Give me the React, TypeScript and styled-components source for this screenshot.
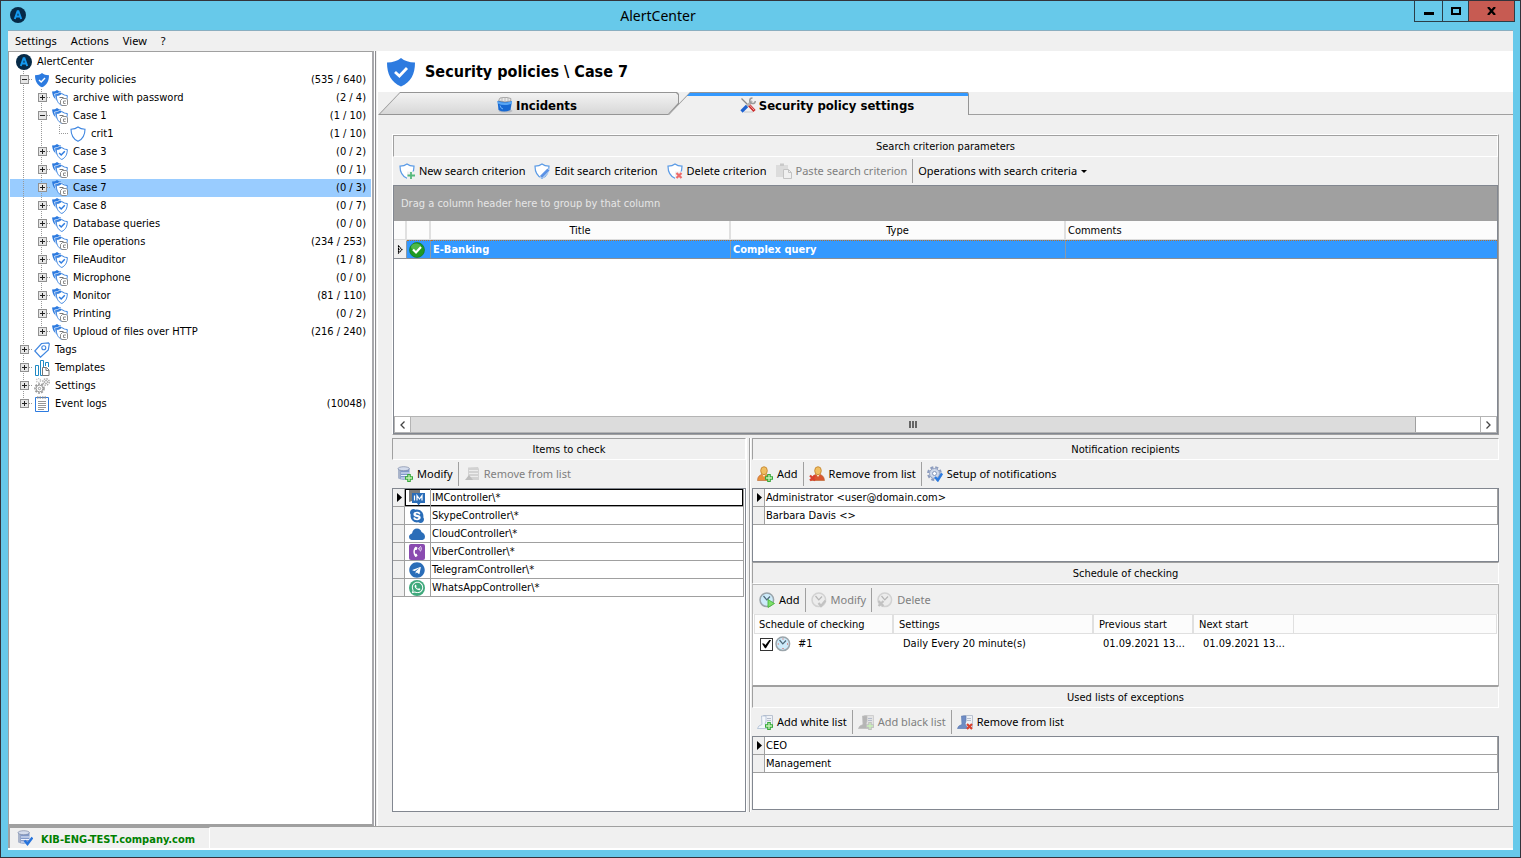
import React from "react";
import styled, { createGlobalStyle, css } from "styled-components";
import { FaSkype, FaTelegram, FaWhatsapp, FaPhoneVolume } from "react-icons/fa";

/* ---------- theme ---------- */
const face = "#f0f0f0";
const line = "#a0a0a0";
const edge = "#828790";
const small = '11px/16px "DejaVu Sans Condensed", "Noto Sans", sans-serif';
const bar = '11px/16px "Noto Sans", "Open Sans", sans-serif';

const Global = createGlobalStyle`
  *, *::before, *::after { box-sizing: border-box; }
  body { margin: 0; background: #67c9ea; color: #000; font: ${small}; }
  button { font: inherit; color: inherit; background: none; border: 0; padding: 0; margin: 0; }
  h1, h2 { margin: 0; font: inherit; }
  svg { display: block; flex: none; }
`;

/* ---------- icons ---------- */
const SHIELD = "M8 1C6.2 2.5 4 3.2 1 3.2C1 9 3 13 8 15.3C13 13 15 9 15 3.2C12 3.2 9.800 2.500 8 1Z";
const Svg = ({ size = 16, children, box = "0 0 16 16" }: { size?: number; box?: string; children: React.ReactNode }) => (
  <svg width={size} height={size} viewBox={box} fill="none" aria-hidden="true">{children}</svg>
);
const Logo = () => (
  <Svg>
    <circle cx="8" cy="8" r="8" fill="#062a47" />
    <path d="M4.800 12L7.600 4.200H8.400L11.200 12M6 9.500H10" stroke="#149af0" strokeWidth="2" />
  </Svg>
);
const SolidShield = ({ size = 16 }: { size?: number }) => (
  <Svg size={size}>
    <path d={SHIELD} fill="#2d7be0" />
    <path d="M5 8L7.200 10L11 6" stroke="#fff" strokeWidth="1.4" />
  </Svg>
);
const OutlineShield = () => (
  <Svg><path d={SHIELD} fill="#fff" stroke="#3f86e0" strokeWidth="1.1" /></Svg>
);
const MiniShield = "M0 2C2.200 2 4 1.300 5.500 0C7 1.300 8.800 2 11 2C11 6.500 9.500 10 5.500 12C1.500 10 0 6.500 0 2Z";
const PolicyIcon = ({ check }: { check?: boolean }) => (
  <Svg>
    <path d="M0 1.500Q3.500 1.500 5 0Q7 1.500 9 1.500V8L5 10Q1 9 0 1.500Z" fill="#2d7be0" />
    <path d="M2.500 4Q6 4 8 2Q10 4 12 4V9L7 12Q3 10 2.500 4Z" fill="#2d7be0" stroke="#fff" strokeWidth=".7" />
    <path d={MiniShield} transform="translate(4.300 3.500)" fill="#fff" stroke="#3f86e0" />
    {check ? (
      <path d="M7.200 9L9.200 11L12.800 7.300" stroke="#2d7be0" strokeWidth="1.500" />
    ) : (
      <>
        <path d="M7.500 7.500H11.500" stroke="#777" />
        <path d="M10.500 8.500H14.500L15.500 10V14.500L14.500 15.500H10L8.500 14V10.500Z" fill="#fff" stroke="#8d8d8d" />
        <path d="M14 11H11.500V13.500H13.500" stroke="#8d8d8d" />
      </>
    )}
  </Svg>
);
const TagIcon = () => (
  <Svg>
    <path d="M7.500 1.500L14.500 .8L15.300 2L14.300 8L6.500 15.200L.8 9Z" fill="#fff" stroke="#3f86e0" strokeWidth="1.2" />
    <circle cx="9.800" cy="5.800" r="2" stroke="#3f86e0" strokeWidth="1.1" />
  </Svg>
);
const TemplatesIcon = () => (
  <Svg>
    <path d="M1.500 5.500H4.500V15.500H1.500ZM6.500 .5H9.500V15.500H6.500Z" fill="#fff" stroke="#1f8ac4" />
    <path d="M11.500 6V2.500H14.500V7" stroke="#1f8ac4" />
    <path d="M8.500 7.500H12.500L15 10V15.500H8.500Z" fill="#fff" stroke="#777" />
    <path d="M12 7.500V10.500H15" stroke="#777" />
  </Svg>
);
const GearsIcon = () => (
  <Svg>
    <circle cx="5.500" cy="10.500" r="4.500" stroke="#9a9a9a" strokeWidth="1.6" strokeDasharray="2 1.200" />
    <circle cx="5.500" cy="10.500" r="3.400" stroke="#9a9a9a" />
    <circle cx="5.500" cy="10.500" r="1.200" stroke="#9a9a9a" />
    <circle cx="12" cy="4" r="3.200" stroke="#a8a8a8" strokeWidth="1.500" strokeDasharray="1.500 1" />
    <circle cx="12" cy="4" r="1.500" stroke="#a8a8a8" />
    <circle cx="4.500" cy="2.500" r="2" stroke="#c6c6c6" strokeWidth="1.500" strokeDasharray="1.200 .8" />
  </Svg>
);
const LogIcon = () => (
  <Svg>
    <path d="M1.500 1.500H14.500V15.500H1.500Z" fill="#fff" stroke="#2d7be0" />
    <path d="M3 1.500H13" stroke="#888" strokeWidth="2" strokeDasharray="1.500 1" />
    <path d="M4 5.500H12M4 7.500H12M4 9.500H12M4 11.500H12M4 13.500H10" stroke="#8a8a8a" strokeWidth=".9" />
  </Svg>
);
const IncidentsIcon = () => (
  <Svg>
    <ellipse cx="8.500" cy="14" rx="7" ry="1.600" fill="#b9bcc2" />
    <path d="M.5 4L1.500 13Q7 16 13.500 13L15 4Z" fill="#1769d2" />
    <path d="M.5 4Q7 7 15 4V6.500Q7 9.500 .8 6.500Z" fill="#57a6f5" />
    <path d="M1.500 3.800L3 1L7 .4L10 .5L13.800 1.500V4Q8 6 1.500 3.800Z" fill="#e8e8e8" stroke="#8d8d8d" strokeWidth=".7" />
    <path d="M5 1V4M8 .8V4.500M11 1V4.300" stroke="#aaa" strokeWidth=".7" />
    <path d="M3 8.500Q3.500 11.500 6 12" stroke="#6fb4fb" />
  </Svg>
);
const ToolsIcon = () => (
  <Svg>
    <path d="M4 15H13" stroke="#cfcfcf" strokeWidth="1.200" />
    <path d="M1.500 1.500L8 8" stroke="#888" strokeWidth="1.200" />
    <path d="M8 7L14.500 14" stroke="#cc2b2b" strokeWidth="3" />
    <path d="M9 7.500L14 13" stroke="#fff" strokeWidth=".6" />
    <path d="M7 9L12 4" stroke="#b5b5b5" strokeWidth="2.400" />
    <path d="M12.500 1A2.800 2.800 0 1 0 15.300 4" stroke="#9a9a9a" strokeWidth="1.500" />
    <path d="M1.500 14.500L7 9" stroke="#1e62d0" strokeWidth="3.200" />
  </Svg>
);
const PlusBadge = ({ c = "#35a83a" }: { c?: string }) => (
  <>
    <path d="M12 8V16M8 12H16" stroke={c} strokeWidth="3.600" />
    <path d="M12 9V15M9 12H15" stroke="#c9f2b8" strokeWidth="1.300" />
  </>
);
const CrossBadge = ({ x = 12, y = 12, c = "#d9412f" }: { x?: number; y?: number; c?: string }) => (
  <path d={`M${x - 2.5} ${y - 2.5}L${x + 2.5} ${y + 2.5}M${x + 2.5} ${y - 2.5}L${x - 2.5} ${y + 2.5}`} stroke={c} strokeWidth="2.200" />
);
const CriterionIcon = ({ kind }: { kind: "new" | "edit" | "delete" }) => (
  <Svg>
    <path d={SHIELD} fill="#fff" stroke="#5b9be6" strokeWidth="1.200" />
    {kind === "new" && (<><path d="M8 8.500H16V16H8Z" fill={face} /><path d="M12 9V16M8.500 12.500H16" stroke="#55b87c" strokeWidth="1.800" /></>)}
    {kind === "edit" && (<><path d="M5.500 14.500L14.500 5.500L16 8L9 15Z" fill={face} /><path d="M7 14L14.500 6.500" stroke="#5b93e6" strokeWidth="3" /></>)}
    {kind === "delete" && (<><path d="M8 8.500H16V16H8Z" fill={face} /><CrossBadge x={12} y={12.500} c="#ee6b6b" /></>)}
  </Svg>
);
const PasteIcon = () => (
  <Svg>
    <path d="M0 2H12V14H0Z" fill="#dcdcdc" />
    <path d="M4 .5H8V3H4Z" fill="#c9c9c9" />
    <path d="M7.500 6.500H12.500L15.500 9.500V15.500H7.500Z" fill={face} stroke="#c4c4c4" />
    <path d="M12.500 6.500V9.500H15.500" stroke="#c4c4c4" />
  </Svg>
);
const ServerIcon = ({ badge, off }: { badge?: "plus" | "check" | "list"; off?: boolean }) => {
  const shade = off ? "#c6c6c6" : "#8199c9";
  const lit = off ? "#dedede" : "#d4dcec";
  return (
    <Svg>
      {badge === "list" ? (
        <>
          <path d="M4 1.500L14 1L15 3V14H4Z" fill="#d2d2d2" />
          <path d="M5 4.500H14M5 7.500H14M5 10.500H14" stroke="#ececec" />
          <path d="M1 14L5 9L9 14Z" fill="#bdbdbd" />
        </>
      ) : (
        <>
          <path d="M1 2.500V12Q6 15.500 12.500 12V2.500Z" fill={shade} />
          <path d="M1 3V12L3.500 13.500V4Z" fill="#a9b4ca" />
          <ellipse cx="6.700" cy="2.700" rx="5.700" ry="2" fill={lit} stroke="#7c8aa8" strokeWidth=".7" />
          <path d="M4 7H12.500M4 9.500H12.500M4 12H9" stroke="#eef3ff" strokeWidth="1" />
        </>
      )}
      {badge === "plus" && <PlusBadge />}
      {badge === "check" && <path d="M7.500 10.500L10.500 14L15.500 7.500" stroke="#2573dc" strokeWidth="2.400" />}
    </Svg>
  );
};
const PersonIcon = ({ badge }: { badge: "plus" | "cross" }) => {
  const plus = badge === "plus";
  return (
    <Svg>
      <path d={plus ? "M.5 14.500Q.5 8.500 7 8Q12 8.500 13 14.500Z" : "M2 14.500Q3 8.500 9 8Q15 8.500 15.500 14.500Z"} fill={plus ? "#e8903a" : "#d9562f"} stroke="#b8612a" strokeWidth=".6" />
      <path d={plus ? "M5 8L7 11L9 8Z" : "M7 8L9 11L11 8Z"} fill="#fbe9c8" />
      <ellipse cx={plus ? 7 : 9} cy="4.700" rx="3.300" ry="4" fill="#f0bf62" stroke="#c07d26" strokeWidth=".8" />
      {plus ? <PlusBadge /> : <CrossBadge x={3.5} y={12} />}
    </Svg>
  );
};
const GearCheckIcon = () => (
  <Svg>
    <circle cx="7.500" cy="7.500" r="6.300" stroke="#8d9cbd" strokeWidth="2.200" strokeDasharray="3 1.950" />
    <circle cx="7.500" cy="7.500" r="5" fill="#d0d9ea" stroke="#93a2c2" />
    <circle cx="7.500" cy="7.500" r="2" fill="#fff" stroke="#8798bb" />
    <path d="M8 11L10.800 14.300L15 7.500" stroke="#2d7be0" strokeWidth="2.400" />
  </Svg>
);
const ClockIcon = ({ badge, off }: { badge?: "play" | "check" | "cross"; off?: boolean }) => (
  <Svg>
    <circle cx="7.800" cy="7.800" r="6.800" fill={off ? "#ececec" : "#cdebfa"} stroke={off ? "#d2d2d2" : "#9aa4aa"} strokeWidth="1.500" />
    <path d="M4.500 4L7.800 7.800L11 4.500" stroke={off ? "#b5b5b5" : "#4d6878"} strokeWidth="1.200" />
    {!badge && <path d="M8 2.500V3.500M8 12V13M2.800 8H3.800M12 8H13" stroke="#e04a3a" />}
    {badge === "play" && <path d="M9 7.500L15.500 11.500L9 15.500Z" fill="#7fe06a" stroke="#3fae35" strokeWidth=".8" />}
    {badge === "check" && <path d="M7.500 11L10 14L14.500 8.500" stroke="#c2c2c2" strokeWidth="2.200" />}
    {badge === "cross" && <CrossBadge x={4} y={11.5} c="#c2c2c2" />}
  </Svg>
);
const ListIcon = ({ kind }: { kind: "white" | "black" | "remove" }) => {
  const person = { white: "#f4f7fb", black: "#b5b5b5", remove: "#6f8cc4" }[kind];
  const rim = { white: "#a3b6cf", black: "#bcbcbc", remove: "#5f7cb4" }[kind];
  return (
    <Svg>
      <path d="M6.500 1.500H15.500V13.500H6.500Z" fill={kind === "black" ? "#e3e3e3" : "#eef1f6"} stroke={kind === "black" ? "#cfcfcf" : "#b9c2d0"} />
      <path d="M10 4.500H14M10 6.500H14" stroke="#b5bccb" />
      <path d="M4.500 2H9V7L8 10L11 14.500H.5Q1 11.500 5 10.500Z" fill={person} stroke={rim} strokeWidth=".7" />
      {kind === "white" && <PlusBadge />}
      {kind === "black" && <PlusBadge c="#c0c0c0" />}
      {kind === "remove" && <CrossBadge x={12.5} y={12.5} />}
    </Svg>
  );
};
const OkIcon = () => (
  <Svg>
    <circle cx="8" cy="8" r="7.500" fill="#1f9a22" stroke="#12701a" strokeWidth=".6" />
    <ellipse cx="7" cy="5" rx="5" ry="3.500" fill="#6fce62" opacity=".6" />
    <path d="M4 7.500L7 10.500L12 5" stroke="#fff" strokeWidth="2.200" />
  </Svg>
);
const Arrow = () => (
  <svg width="5" height="9" viewBox="0 0 5 9" aria-hidden="true"><path d="M0 0L5 4.500L0 9Z" fill="#000" /></svg>
);
const HollowArrow = () => (
  <svg width="6" height="9" viewBox="0 0 6 9" fill="none" aria-hidden="true"><path d="M1.500 1L5 4.500L1.500 8ZM1 4.500H3" stroke="#000" strokeWidth="1.100" strokeDasharray="1.600 .6" /></svg>
);
const ImIcon = () => (
  <Svg>
    <path d="M0 0H11V3H3V11L0 12Z" fill="#7d7d7d" />
    <path d="M3 3H16V13H11.500L9.500 15.500L8 13H3Z" fill="#2a6db8" />
    <path d="M5.500 5.500V10.500M8 10.500V5.500L10.500 9L13 5.500V10.500" stroke="#fff" strokeWidth="1.200" />
  </Svg>
);
const CloudIcon = () => (
  <Svg><path d="M2.500 14Q0 13.500 0 11Q0 8.500 3 7.500Q4 2.500 8 2.500Q11.500 2.500 12.500 6Q16 7.500 16 11Q16 13.500 13.500 14Z" fill="#2a6db8" /></Svg>
);
const ViberTile = styled.span`
  display: grid; place-items: center; width: 16px; height: 16px; border-radius: 2px; background: #8a4bb0; color: #fff;
`;
const ViberGlyph = styled(FaPhoneVolume)`transform: rotate(0deg);`;
const WhatsTile = styled(ViberTile)`border-radius: 8px; background: #3fa97c;`;

/* ---------- window frame ---------- */
const Window = styled.div`
  display: flex; flex-direction: column; min-height: 100vh;
  border: 1px solid #33333b; padding: 0 7px 7px; background: #67c9ea;
`;
const TitleBar = styled.header`
  display: flex; align-items: flex-start; height: 29px; margin-right: -2px; padding-left: 2px;
  & > svg { margin-top: 6px; }
`;
const Title = styled.h1`
  flex: 1; padding-right: 124px; text-align: center;
  font: 14px/30px "Noto Sans", sans-serif;
`;
const CaptionButton = styled.button<{ $w: number; $close?: boolean }>`
  display: grid; place-items: center; width: ${p => p.$w}px; height: 21px;
  border: 1px solid #2b3d47; border-top: 0; border-right-width: ${p => (p.$close ? 1 : 0)}px;
  background: ${p => (p.$close ? "#c75b52" : "transparent")};
`;
const Client = styled.div`
  flex: 1; display: flex; flex-direction: column; background: ${face}; border-top: 1px solid #8aaec0;
`;
const MenuBar = styled.nav`
  display: flex; gap: 14px; height: 20px; padding-left: 7px; font: ${bar};
`;
const Body = styled.div`flex: 1; display: flex;`;

/* ---------- tree ---------- */
const TreePane = styled.aside`
  flex: none; width: 366px; background: #fff; padding: 1px;
  border: 1px solid ${line}; border-right: 2px solid #a8a8ac; border-bottom: 2px solid ${line};
`;
const Divider = styled.div`
  flex: none; width: 4px; background: ${face};
  border-left: 1px solid #fff; border-right: 1px solid #fff;
  &::before { content: ""; display: block; width: 1px; height: 100%; background: #8c8c90; }
`;
const TreeRow = styled.div<{ $on?: boolean }>`
  display: flex; height: 18px; line-height: 18px; padding: 0 5px;
  background: ${p => (p.$on ? "#99ccff" : "transparent")};
`;
const dotsY = "repeating-linear-gradient(#999 0 1px, transparent 1px 2px)";
const dotsX = "repeating-linear-gradient(90deg, #999 0 1px, transparent 1px 2px)";
type CellKind = "line" | "mid" | "end" | "elbow";
const GuideCell = styled.span<{ $kind: CellKind }>`
  flex: none; width: 18px; height: 18px; padding: 4px 0 0 5px;
  background-repeat: no-repeat;
  ${p => p.$kind === "line" && css`background-image: ${dotsY}; background-size: 1px 18px; background-position: 8px 0;`}
  ${p => p.$kind === "mid" && css`background-image: ${dotsY}, ${dotsX}; background-size: 1px 18px, 5px 1px; background-position: 8px 0, 14px 8px;`}
  ${p => p.$kind === "end" && css`background-image: ${dotsY}, ${dotsX}; background-size: 1px 8px, 5px 1px; background-position: 8px 0, 14px 8px;`}
  ${p => p.$kind === "elbow" && css`background-image: ${dotsY}, ${dotsX}; background-size: 1px 8px, 10px 1px; background-position: 8px 0, 8px 8px;`}
`;
const Expander = styled.button<{ $open?: boolean }>`
  display: block; width: 9px; height: 9px; border: 1px solid #919191;
  background:
    linear-gradient(#222, #222) center / 5px 1px no-repeat,
    linear-gradient(#222, #222) center / 1px ${p => (p.$open ? 0 : 5)}px no-repeat,
    #e6e6e6;
`;
const NodeIcon = styled.span`flex: none; width: 18px; margin-right: 4px; padding: 1px;`;
const NodeCount = styled.span`margin-left: auto;`;

type Node = { text: string; count?: string; icon: React.ReactNode; cells: CellKind[]; open?: boolean; on?: boolean };
const policy = (text: string, count: string, check: boolean, extra: Partial<Node> = {}): Node => ({
  text, count, icon: <PolicyIcon check={check} />, cells: ["line", "mid"], ...extra,
});
const nodes: Node[] = [
  { text: "AlertCenter", icon: <Logo />, cells: [] },
  { text: "Security policies", count: "(535 / 640)", icon: <SolidShield />, cells: ["mid"], open: true },
  policy("archive with password", "(2 / 4)", false),
  policy("Case 1", "(1 / 10)", false, { open: true }),
  { text: "crit1", count: "(1 / 10)", icon: <OutlineShield />, cells: ["line", "line", "elbow"] },
  policy("Case 3", "(0 / 2)", true),
  policy("Case 5", "(0 / 1)", false),
  policy("Case 7", "(0 / 3)", false, { on: true }),
  policy("Case 8", "(0 / 7)", true),
  policy("Database queries", "(0 / 0)", true),
  policy("File operations", "(234 / 253)", false),
  policy("FileAuditor", "(1 / 8)", true),
  policy("Microphone", "(0 / 0)", false),
  policy("Monitor", "(81 / 110)", true),
  policy("Printing", "(0 / 2)", false),
  policy("Uploud of files over HTTP", "(216 / 240)", false, { cells: ["line", "end"] }),
  { text: "Tags", icon: <TagIcon />, cells: ["mid"] },
  { text: "Templates", icon: <TemplatesIcon />, cells: ["mid"] },
  { text: "Settings", icon: <GearsIcon />, cells: ["mid"] },
  { text: "Event logs", count: "(10048)", icon: <LogIcon />, cells: ["end"] },
];
const Tree = () => (
  <TreePane>
    {nodes.map(n => (
      <TreeRow key={n.text + n.cells.length} $on={n.on}>
        {n.cells.map((kind, i) => (
          <GuideCell key={i} $kind={kind}>
            {i === n.cells.length - 1 && kind !== "elbow" && (
              <Expander $open={n.open} aria-label={`${n.open ? "Collapse" : "Expand"} ${n.text}`} />
            )}
          </GuideCell>
        ))}
        <NodeIcon>{n.icon}</NodeIcon>
        <span>{n.text}</span>
        {n.count && <NodeCount>{n.count}</NodeCount>}
      </TreeRow>
    ))}
  </TreePane>
);

/* ---------- main area ---------- */
const Main = styled.main`flex: 1; min-width: 0; display: flex; flex-direction: column;`;
const Heading = styled.div`
  display: flex; align-items: center; gap: 8px; height: 41px; padding-left: 7px; background: #fff;
  h2 { font: bold 16px/22px "DejaVu Sans Condensed", sans-serif; }
`;
const TabStrip = styled.div`
  display: flex; height: 23px;
  &::after { content: ""; flex: 1; border-bottom: 1px solid ${line}; }
`;
const Tab = styled.button<{ $active?: boolean }>`
  position: relative; z-index: 0; display: flex; align-items: center; justify-content: center; gap: 3px;
  width: 301px; padding: 4px 0 0 17px; margin-left: ${p => (p.$active ? -11 : 0)}px;
  font: bold 13px/18px "DejaVu Sans Condensed", sans-serif;
  &::before, &::after { content: ""; position: absolute; inset: 0; z-index: -2; background: #959595; }
  &::after { z-index: -1; }
  svg { margin-bottom: 2px; }
  ${p => p.$active ? css`
    &::before { clip-path: polygon(22px 0, calc(100% - 1px) 0, 100% 2px, 100% 100%, 0 100%); }
    &::after {
      background: linear-gradient(#3399ff 0 4px, ${face} 4px);
      clip-path: polygon(22px 1px, calc(100% - 2px) 1px, calc(100% - 1px) 2px, calc(100% - 1px) 100%, 1px 100%);
    }
  ` : css`
    &::before { clip-path: polygon(22px 0, calc(100% - 2px) 0, 100% 2px, 100% 12px, calc(100% - 11px) 100%, 0 100%); }
    &::after {
      background: linear-gradient(#f4f4f4, #d6d6d6);
      clip-path: polygon(22px 1px, calc(100% - 3px) 1px, calc(100% - 1px) 3px, calc(100% - 1px) 11px, calc(100% - 11px) calc(100% - 1px), 2px calc(100% - 1px));
    }
  `}
`;
const Content = styled.div`flex: 1; display: flex; flex-direction: column; gap: 3px; padding: 19px 14px 14px;`;
const Panel = styled.section<{ $w?: number; $grow?: boolean }>`
  display: flex; flex-direction: column; min-width: 0;
  ${p => (p.$w ? `flex: none; width: ${p.$w}px;` : "")}
  ${p => (p.$grow ? "flex: 1;" : "")}
`;
const CriteriaPanel = styled(Panel)`
  height: 301px; border: 1px solid #fff; border-right-color: ${line}; border-bottom-color: ${line};
`;
const PanelTitle = styled.h2`
  flex: none; height: 22px; line-height: 21px; text-align: center;
  border: 1px solid #fff; border-top-color: ${line}; border-left-color: ${line};
`;
const ToolBar = styled.div<{ $inset?: boolean }>`
  flex: none; display: flex; align-items: center; height: 28px; padding-left: ${p => (p.$inset ? 6 : 5)}px; font: ${bar};
`;
const Tool = styled.button<{ $off?: boolean; $wide?: boolean }>`
  display: flex; align-items: center; gap: 4px; height: 24px; white-space: nowrap;
  margin-right: ${p => (p.$wide ? 9 : 5)}px; color: ${p => (p.$off ? "#7f7f7f" : "#000")};
`;
const Sep = styled.span`width: 1px; height: 24px; margin-right: 5px; background: ${line};`;
const Caret = styled.span`border: 3px solid transparent; border-top-color: #000; border-bottom-width: 0;`;

const GridBox = styled.div`
  flex: 1; display: flex; flex-direction: column; min-height: 0; background: #fff; border: 1px solid ${edge};
`;
const GroupBar = styled.div`
  flex: none; height: 35px; padding-left: 7px; line-height: 36px; background: #a0a0a0; color: #e6e6e6;
`;
const Table = styled.table`
  width: 100%; table-layout: fixed; border-collapse: separate; border-spacing: 0;
  th, td { height: 18px; padding: 0 2px; font-weight: normal; text-align: left; white-space: nowrap; overflow: hidden; text-overflow: ellipsis; line-height: 17px; }
`;
const CriteriaTable = styled(Table)`
  th { height: 19px; background: #fcfcfc; border-right: 2px solid #e0e0e0; border-bottom: 1px solid #ddd; text-align: center; }
  th:last-child { text-align: left; border-right: 0; }
  td { height: 19px; background: #3399ff; color: #fff; font-weight: bold; border-top: 1px dotted #b5702c; border-bottom: 1px solid #8a8f96; border-right: 1px solid #8c99a6; }
  td:first-child { background: ${face}; border-top-color: ${face}; padding-left: 3px; }
  td:last-child { border-right: 0; }
`;
const RowsTable = styled(Table)`
  td { border-right: 1px solid ${line}; border-bottom: 1px solid ${line}; padding: 0 1px; }
  td:first-child { background: ${face}; padding-left: 4px; }
`;
const ItemsTable = styled(RowsTable)`
  td:nth-child(2) { padding: 0 4px; }
  tr:first-child td:nth-child(2) { box-shadow: inset 1px 1px #000, inset 0 -1px #000; }
  tr:first-child td:nth-child(3) { box-shadow: inset 0 1px #000, inset -1px -1px #000; }
`;
const ItemsBox = styled(GridBox)`padding-right: 1px; `;
const Filler = styled.div`flex: 1;`;
const ScrollBar = styled.div`
  flex: none; display: flex; height: 17px; background: #fff; border: 1px solid #b4b4b4; border-width: 1px 0;
  button { display: grid; place-items: center; width: 17px; border: 1px solid #b4b4b4; border-width: 0 1px; }
`;
const Thumb = styled.div`
  flex: 1; margin-right: 64px; display: flex; align-items: center; justify-content: center; gap: 1px;
  background: #dcdcdc; border-right: 1px solid ${line};
  i { width: 2px; height: 7px; background: #666; }
`;
const Lower = styled.div`flex: 1; display: flex;`;
const Gutter = styled.div`
  flex: none; width: 5px; border-left: 1px solid #fff; border-right: 1px solid #fff;
  &::after { content: ""; display: block; width: 1px; height: 100%; margin-left: 2px; background: ${line}; }
`;
const RightColumn = styled.div`flex: 1; min-width: 0; display: flex; flex-direction: column; padding: 0 0 2px 1px;`;

const ScheduleBox = styled.div`
  flex: 1; display: flex; flex-direction: column; padding-top: 1px; border: 1px solid #b9b9b9; border-bottom-color: ${line};
`;
const ScheduleBody = styled.div`flex: 1; padding: 0 1px; background: #fff;`;
const ScheduleTable = styled(Table)`
  th { height: 20px; padding: 0 5px; background: #fcfcfc; border: 1px solid #e0e0e0; border-left-width: 0; border-right-width: 2px; }
  th:first-child { border-left-width: 1px; padding-left: 4px; }
  th:nth-child(4), th:last-child { border-right-width: 1px; }
  td { height: 19px; padding: 0 5px 0 9px; }
  td:first-child { padding-left: 6px; }
`;
const CheckLine = styled.label`display: flex; align-items: center; gap: 7px;`;
const CheckBox = styled.input`
  appearance: none; width: 13px; height: 13px; margin: 1px -5px 0 0; border: 1px solid #333; background: #fff;
  &:checked::before {
    content: ""; display: block; width: 11px; height: 11px; background: #000;
    clip-path: polygon(9% 45%, 27% 45%, 40% 60%, 75% 14%, 92% 14%, 45% 88%, 36% 88%);
  }
`;

const StatusBar = styled.footer`
  display: flex; height: 24px; background: ${face}; border-top: 1px solid ${line}; border-bottom: 2px solid #fff;
`;
const StatusCell = styled.div`
  display: flex; align-items: center; gap: 8px; width: 202px; padding: 3px 0 0 7px; color: #008000; font-weight: bold;
  border-left: 2px solid ${line}; border-top: 1px solid ${line}; border-right: 1px solid #fff;
  svg { margin-top: -4px; }
`;

const items: [React.ReactNode, string][] = [
  [<ImIcon />, "IMController\\*"],
  [<FaSkype size={16} color="#2a6db8" />, "SkypeController\\*"],
  [<CloudIcon />, "CloudController\\*"],
  [<ViberTile><ViberGlyph size={11} /></ViberTile>, "ViberController\\*"],
  [<FaTelegram size={16} color="#2a6db8" />, "TelegramController\\*"],
  [<WhatsTile><FaWhatsapp size={13} /></WhatsTile>, "WhatsAppController\\*"],
];

const NameList = ({ names }: { names: string[] }) => (
  <GridBox>
    <RowsTable>
      <colgroup><col width="12" /><col /></colgroup>
      <tbody>
        {names.map((name, i) => (
          <tr key={name}><td>{i === 0 && <Arrow />}</td><td>{name}</td></tr>
        ))}
      </tbody>
    </RowsTable>
  </GridBox>
);

export default function App() {
  return (
    <Window>
      <Global />
      <TitleBar>
        <Logo />
        <Title>AlertCenter</Title>
        <CaptionButton $w={28} aria-label="Minimize"><svg width="10" height="10"><path d="M0 6H10V9H0Z" /></svg></CaptionButton>
        <CaptionButton $w={26} aria-label="Maximize"><svg width="10" height="8"><path d="M1 1H9V7H1Z" fill="none" stroke="#000" strokeWidth="2" /></svg></CaptionButton>
        <CaptionButton $w={47} $close aria-label="Close"><svg width="9" height="8"><path d="M1 0L8 8M8 0L1 8" stroke="#000" strokeWidth="2.200" /></svg></CaptionButton>
      </TitleBar>
      <Client>
        <MenuBar>
          <button>Settings</button><button>Actions</button><button>View</button><button>?</button>
        </MenuBar>
        <Body>
          <Tree />
          <Divider />
          <Main>
            <Heading><SolidShield size={32} /><h2>Security policies \ Case 7</h2></Heading>
            <TabStrip role="tablist">
              <Tab role="tab"><IncidentsIcon />Incidents</Tab>
              <Tab role="tab" aria-selected $active><ToolsIcon />Security policy settings</Tab>
            </TabStrip>
            <Content>
              <CriteriaPanel>
                <PanelTitle>Search criterion parameters</PanelTitle>
                <ToolBar $inset>
                  <Tool $wide><CriterionIcon kind="new" />New search criterion</Tool>
                  <Tool $wide><CriterionIcon kind="edit" />Edit search criterion</Tool>
                  <Tool $wide><CriterionIcon kind="delete" />Delete criterion</Tool>
                  <Tool $off><PasteIcon />Paste search criterion</Tool>
                  <Sep />
                  <Tool>Operations with search criteria<Caret /></Tool>
                </ToolBar>
                <GridBox>
                  <GroupBar>Drag a column header here to group by that column</GroupBar>
                  <CriteriaTable>
                    <colgroup><col width="13" /><col width="24" /><col width="300" /><col width="335" /><col /></colgroup>
                    <thead><tr><th /><th /><th>Title</th><th>Type</th><th>Comments</th></tr></thead>
                    <tbody><tr><td><HollowArrow /></td><td><OkIcon /></td><td>E-Banking</td><td>Complex query</td><td /></tr></tbody>
                  </CriteriaTable>
                  <Filler />
                  <ScrollBar>
                    <button aria-label="Scroll left"><svg width="5" height="8"><path d="M4.500 .5L1 4L4.500 7.500" fill="none" stroke="#444" strokeWidth="1.300" /></svg></button>
                    <Thumb><i /><i /><i /></Thumb>
                    <button aria-label="Scroll right"><svg width="5" height="8"><path d="M.5 .5L4 4L.5 7.500" fill="none" stroke="#444" strokeWidth="1.300" /></svg></button>
                  </ScrollBar>
                </GridBox>
              </CriteriaPanel>
              <Lower>
                <Panel $w={354}>
                  <PanelTitle>Items to check</PanelTitle>
                  <ToolBar>
                    <Tool><ServerIcon badge="plus" />Modify</Tool>
                    <Sep />
                    <Tool $off><ServerIcon badge="list" off />Remove from list</Tool>
                  </ToolBar>
                  <ItemsBox>
                    <ItemsTable>
                      <colgroup><col width="12" /><col width="26" /><col /></colgroup>
                      <tbody>
                        {items.map(([icon, name], i) => (
                          <tr key={name}><td>{i === 0 && <Arrow />}</td><td>{icon}</td><td>{name}</td></tr>
                        ))}
                      </tbody>
                    </ItemsTable>
                  </ItemsBox>
                </Panel>
                <Gutter />
                <RightColumn>
                  <Panel $grow>
                    <PanelTitle>Notification recipients</PanelTitle>
                    <ToolBar>
                      <Tool><PersonIcon badge="plus" />Add</Tool>
                      <Sep />
                      <Tool><PersonIcon badge="cross" />Remove from list</Tool>
                      <Sep />
                      <Tool><GearCheckIcon />Setup of notifications</Tool>
                    </ToolBar>
                    <NameList names={["Administrator <user@domain.com>", "Barbara Davis <>"]} />
                  </Panel>
                  <Panel $grow>
                    <PanelTitle>Schedule of checking</PanelTitle>
                    <ScheduleBox>
                      <ToolBar $inset>
                        <Tool><ClockIcon badge="play" />Add</Tool>
                        <Sep />
                        <Tool $off><ClockIcon badge="check" off />Modify</Tool>
                        <Sep />
                        <Tool $off><ClockIcon badge="cross" off />Delete</Tool>
                      </ToolBar>
                      <ScheduleBody>
                        <ScheduleTable>
                          <colgroup><col width="140" /><col width="200" /><col width="100" /><col width="100" /><col /></colgroup>
                          <thead><tr><th>Schedule of checking</th><th>Settings</th><th>Previous start</th><th>Next start</th><th /></tr></thead>
                          <tbody>
                            <tr>
                              <td><CheckLine><CheckBox type="checkbox" defaultChecked /><ClockIcon />#1</CheckLine></td>
                              <td>Daily Every 20 minute(s)</td>
                              <td>01.09.2021 13...</td>
                              <td>01.09.2021 13...</td>
                              <td />
                            </tr>
                          </tbody>
                        </ScheduleTable>
                      </ScheduleBody>
                    </ScheduleBox>
                  </Panel>
                  <Panel $grow>
                    <PanelTitle>Used lists of exceptions</PanelTitle>
                    <ToolBar>
                      <Tool><ListIcon kind="white" />Add white list</Tool>
                      <Sep />
                      <Tool $off><ListIcon kind="black" />Add black list</Tool>
                      <Sep />
                      <Tool><ListIcon kind="remove" />Remove from list</Tool>
                    </ToolBar>
                    <NameList names={["CEO", "Management"]} />
                  </Panel>
                </RightColumn>
              </Lower>
            </Content>
          </Main>
        </Body>
        <StatusBar>
          <StatusCell><ServerIcon badge="check" />KIB-ENG-TEST.company.com</StatusCell>
        </StatusBar>
      </Client>
    </Window>
  );
}
